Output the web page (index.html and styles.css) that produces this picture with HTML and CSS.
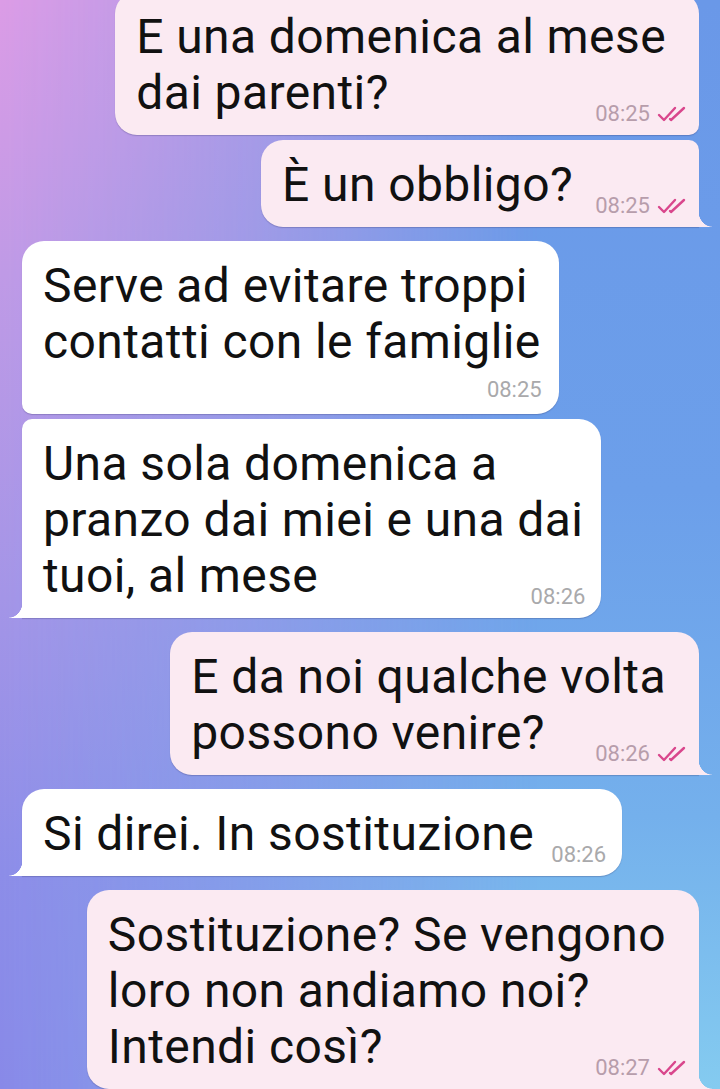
FILE: index.html
```html
<!DOCTYPE html>
<html lang="it">
<head>
    <meta charset="UTF-8">
    <meta name="viewport" content="width=device-width, initial-scale=1.0">
    <title>Chat</title>
    <link rel="stylesheet" href="styles.css">
</head>
<body>
    <div class="screen">
        <div class="chat">
            <div class="bubble out join-bottom first">
                <div class="text">E una domenica al mese<br>dai parenti?<span class="spacer"></span></div>
                <div class="meta"><span class="time">08:25</span><svg class="ticks" viewBox="0 0 30 16"><path d="M2 9 L7 14 L18 2 M13 13 L14 14 L27 2"/></svg></div>
            </div>
            <div class="bubble out tail join-top grouped">
                <div class="text">È un obbligo?<span class="spacer"></span></div>
                <div class="meta"><span class="time">08:25</span><svg class="ticks" viewBox="0 0 30 16"><path d="M2 9 L7 14 L18 2 M13 13 L14 14 L27 2"/></svg></div>
            </div>

            <div class="bubble in join-bottom stack">
                <div class="text">Serve ad evitare troppi<br>contatti con le famiglie</div>
                <div class="meta"><span class="time">08:25</span></div>
            </div>
            <div class="bubble in tail join-top grouped">
                <div class="text">Una sola domenica a<br>pranzo dai miei e una dai<br>tuoi, al mese<span class="spacer"></span></div>
                <div class="meta"><span class="time">08:26</span></div>
            </div>

            <div class="bubble out tail">
                <div class="text">E da noi qualche volta<br>possono venire?<span class="spacer"></span></div>
                <div class="meta"><span class="time">08:26</span><svg class="ticks" viewBox="0 0 30 16"><path d="M2 9 L7 14 L18 2 M13 13 L14 14 L27 2"/></svg></div>
            </div>

            <div class="bubble in tail">
                <div class="text">Si direi. In sostituzione<span class="spacer"></span></div>
                <div class="meta"><span class="time">08:26</span></div>
            </div>

            <div class="bubble out tail">
                <div class="text">Sostituzione? Se vengono<br>loro non andiamo noi?<br>Intendi così?<span class="spacer"></span></div>
                <div class="meta"><span class="time">08:27</span><svg class="ticks" viewBox="0 0 30 16"><path d="M2 9 L7 14 L18 2 M13 13 L14 14 L27 2"/></svg></div>
            </div>
        </div>
    </div>
</body>
</html>
```

FILE: styles.css
```css
body {
    margin: 0;
    padding: 0;
    font-family: Roboto, "Noto Sans", sans-serif;
}
.screen {
    position: relative;
    isolation: isolate;
    width: 720px;
    height: 1089px;
    overflow: hidden;
    background: linear-gradient(to bottom, #6a98e8 0%, #6c9fea 45%, #74b0ec 75%, #84cbf0 100%);
}
/* left side colours, faded out towards the right */
.screen::before {
    content: "";
    position: absolute;
    inset: 0;
    z-index: -1;
    background: linear-gradient(to bottom, #dc9ce6 0%, #c09ae6 25%, #a495e7 55%, #8d8de8 80%, #8889e8 100%);
    -webkit-mask-image: linear-gradient(to right, #000 0%, rgba(0,0,0,0.6) 35%, transparent 75%);
    mask-image: linear-gradient(to right, #000 0%, rgba(0,0,0,0.6) 35%, transparent 75%);
}
.chat {
    display: flex;
    flex-direction: column;
    padding: 0 21px 0 22px;
}
.bubble {
    position: relative;
    display: grid;
    margin-top: 14px;
    padding: 17px 18px 14px 21px;
    border-radius: 22px;
    font-size: 48px;
    line-height: 56px;
    letter-spacing: 0.4px;
    color: #111;
    box-shadow: 0 1px 1px rgba(40, 40, 90, 0.25);
}
.bubble.first {
    margin-top: -8px;
}
.bubble.grouped {
    margin-top: 5px;
}
.bubble.out {
    align-self: flex-end;
    padding-right: 33px;
    background: #fbeaf2;
}
.bubble.in {
    align-self: flex-start;
    background: #fff;
}
.out.join-bottom { border-bottom-right-radius: 10px; }
.out.join-top { border-top-right-radius: 10px; }
.in.join-bottom { border-bottom-left-radius: 10px; }
.in.join-top { border-top-left-radius: 10px; }
.out.tail { border-bottom-right-radius: 0; }
.in.tail { border-bottom-left-radius: 0; }

.out.tail::after,
.in.tail::after {
    content: "";
    position: absolute;
    bottom: 0;
    width: 14px;
    height: 17px;
}
.out.tail::after {
    right: -13px;
    background: radial-gradient(14px 17px at 100% 0, transparent 96%, #fbeaf2 100%);
}
.in.tail::after {
    left: -13px;
    background: radial-gradient(14px 17px at 0 0, transparent 96%, #fff 100%);
}

.text,
.meta {
    grid-area: 1 / 1;
}
.spacer {
    display: inline-block;
    width: 70px;
    height: 1px;
}
.out .spacer {
    width: 93px;
}
.meta {
    align-self: end;
    justify-self: end;
    display: flex;
    align-items: center;
    gap: 7px;
    height: 20px;
    margin-bottom: -3px;
    font-size: 22px;
    line-height: 20px;
    letter-spacing: 0;
    margin-right: -2px;
}
.out .meta {
    margin-right: -21px;
}
.in .time {
    color: #a9a9ab;
}
.out .time {
    color: #b79dab;
}
.ticks {
    width: 30px;
    height: 16px;
    fill: none;
    stroke: #d9468c;
    stroke-width: 2.4;
    stroke-linecap: round;
    stroke-linejoin: round;
}
/* time on its own row under the text */
.bubble.stack {
    padding-bottom: 4px;
}
.stack .meta {
    grid-area: 2 / 1;
    height: 40px;
    line-height: 40px;
    margin-bottom: 0;
    margin-right: -1px;
}
```
